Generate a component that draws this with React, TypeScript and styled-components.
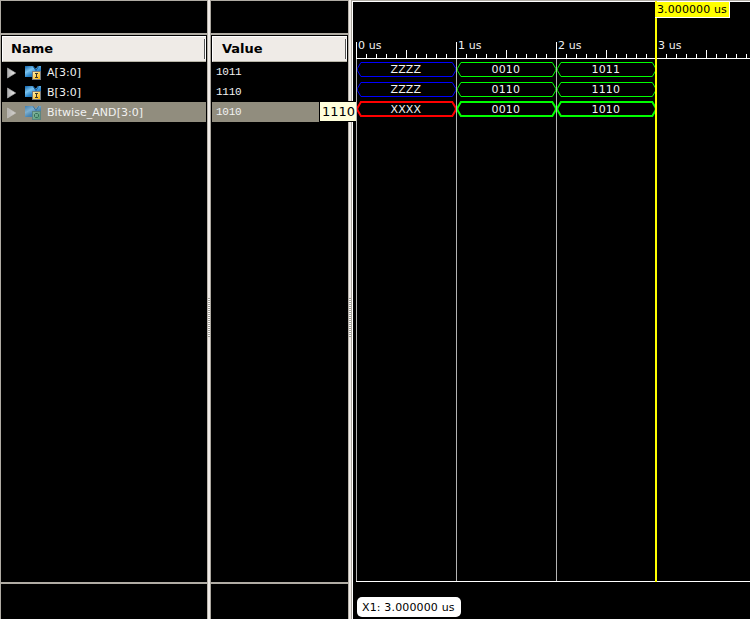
import React from "react";
import styled, { createGlobalStyle } from "styled-components";

const GlobalStyle = createGlobalStyle`
  *, *::after { box-sizing: border-box; }
  body { margin: 0; background: #000; overflow: hidden; }
`;

const Viewer = styled.main`
  position: relative;
  display: grid;
  grid-template-columns: 207px 4px 137px 4px 398px;
  width: 750px;
  height: 619px;
  background: #000;
  color: #f2f2f2;
  font: 11px/20px "DejaVu Sans", sans-serif;
`;

const Pane = styled.section<{ $edge?: boolean }>`
  display: flex;
  flex-direction: column;
  min-width: 0;
  border-top: 1px solid #b0aca4;
  border-left: ${(p) => (p.$edge ? "1px solid #b0aca4" : "0")};
  padding: 0 1px;
`;

const PaneTop = styled.div`
  height: 34px;
  margin: 0 -1px;
  border-bottom: 2px solid #b0aca4;
`;

const Header = styled.header<{ $indent: number; $width: number }>`
  display: flex;
  align-items: center;
  justify-content: space-between;
  width: ${(p) => p.$width}px;
  height: 26px;
  margin-top: 1px;
  padding-left: ${(p) => p.$indent}px;
  background: #efebe7;
  border-top: 1px solid #fff;
  border-left: 1px solid #fff;
  border-bottom: 1px solid #b8b5a8;
  color: #000;
  font: bold 13px/24px "DejaVu Sans", sans-serif;

  &::after {
    content: "";
    width: 2px;
    height: 20px;
    border-left: 1px solid #555;
    border-right: 1px solid #fff;
  }
`;

const Rows = styled.div`
  flex: 1;
`;

const Row = styled.div<{ $selected?: boolean }>`
  display: flex;
  align-items: center;
  height: 20px;
  background: ${(p) => (p.$selected ? "#918d7e" : "transparent")};
`;

const SignalName = styled.span`
  margin-left: 5px;
  padding-top: 1px;
  letter-spacing: 0.04px;
  white-space: pre;
`;

const SignalValue = styled.span`
  padding: 0 0 1px 4px;
  font: 11px/18px "Liberation Mono", monospace;
  letter-spacing: -0.25px;
`;

const PaneBottom = styled.div`
  height: 37px;
  margin: 0 -1px;
  border-top: 2px solid #b0aca4;
`;

const Splitter = styled.div`
  display: flex;
  align-items: center;
  justify-content: center;
  padding-top: 16px;
  background: #efebe7;
  border-left: 1px solid #b8b3ab;
  border-right: 1px solid #aaa69e;
`;

const Grip = styled.div`
  width: 2px;
  height: 39px;
  background: repeating-linear-gradient(#aaa69e 0 1px, #fff 1px 2px);
`;

const WavePane = styled.section`
  border-top: 1px solid #b0aca4;
`;

const Tooltip = styled.div`
  position: absolute;
  left: 319px;
  top: 101px;
  width: 37px;
  height: 21px;
  border: 1px solid #000;
  border-right: 0;
  padding-left: 2px;
  background: #ffffdc;
  color: #000;
  font: 13px/20px "DejaVu Sans", sans-serif;
`;

const CursorTag = styled.div`
  position: absolute;
  left: 655px;
  top: 2px;
  width: 75px;
  height: 16px;
  padding-left: 2px;
  background: #ff0;
  border: solid #fff;
  border-width: 0 1px 1px 0;
  color: #000;
  font: 11px/15px "DejaVu Sans", sans-serif;
  letter-spacing: 0.1px;
`;

const MarkerReadout = styled.div`
  position: absolute;
  left: 357px;
  top: 597px;
  width: 104px;
  height: 20px;
  padding: 1px 0 0 5px;
  border-radius: 5px;
  background: #fff;
  color: #000;
  letter-spacing: 0.15px;
`;

const Drawing = styled.svg`
  display: block;
  flex: none;
`;

const WaveText = styled.text`
  fill: #f2f2f2;
  font: 11px "DejaVu Sans", sans-serif;
  letter-spacing: 0.1px;
`;

type Signal = {
  name: string;
  value: string;
  output?: boolean;
  segments: { label: string; color: string }[];
};

const GREEN = "#00ff00";
const BLUE = "#0000ff";

const signals: Signal[] = [
  {
    name: "A[3:0]",
    value: "1011",
    segments: [
      { label: "ZZZZ", color: BLUE },
      { label: "0010", color: GREEN },
      { label: "1011", color: GREEN },
    ],
  },
  {
    name: "B[3:0]",
    value: "1110",
    segments: [
      { label: "ZZZZ", color: BLUE },
      { label: "0110", color: GREEN },
      { label: "1110", color: GREEN },
    ],
  },
  {
    name: "Bitwise_AND[3:0]",
    value: "1010",
    output: true,
    segments: [
      { label: "XXXX", color: "#ff0000" },
      { label: "0010", color: GREEN },
      { label: "1010", color: GREEN },
    ],
  },
];

function SignalIcons({ output = false }: { output?: boolean }) {
  const id = output ? "out" : "in";
  return (
    <Drawing width="40" height="20" viewBox="0 0 40 20">
      <defs>
        <linearGradient id={`bus-${id}`} x1="0" y1="0" x2=".8" y2="1">
          <stop offset="0" stopColor={output ? "#3f7fb0" : "#0f62a8"} />
          <stop offset=".38" stopColor={output ? "#7fb0cf" : "#7cc4f0"} />
          <stop offset=".65" stopColor={output ? "#4b88b5" : "#2a86cc"} />
          <stop offset="1" stopColor={output ? "#36719b" : "#0d5492"} />
        </linearGradient>
        <linearGradient id={`tag-${id}`} x1="0" y1="0" x2="1" y2="1">
          <stop stopColor={output ? "#87b7a2" : "#fff3b5"} />
          <stop offset="1" stopColor={output ? "#559b77" : "#ffb000"} />
        </linearGradient>
        <linearGradient id={`arrow-${id}`} x1="0" y1="0" x2="1" y2="0">
          <stop stopColor={output ? "#b3b1ad" : "#aaa"} />
          <stop offset="1" stopColor={output ? "#d8d6d2" : "#f5f5f5"} />
        </linearGradient>
      </defs>
      <path d="M5.5 6v10l8.2-5z" fill={`url(#arrow-${id})`} stroke={output ? "#c4c2be" : "#aaa"} strokeWidth=".7" />
      <path d="M23 4h8l2 2.5h1L36 4h3v11h-4l-2-1-2 1h-8z" fill={`url(#bus-${id})`} />
      <path d="m31 4.3 3 4.2 2.7-4.2" fill="none" stroke={output ? "#356f9b" : "#07549a"} />
      <rect x="30.5" y="9.5" width="8" height="8" fill={`url(#tag-${id})`} stroke={output ? "#5b8580" : "#777b80"} />
      {output ? (
        <path d="M33.5 11.5h2l1 1v2l-1 1h-2l-1-1v-2z" fill="none" stroke="#356c56" />
      ) : (
        <path d="M33 11.5h3M34.5 11.5v4M33 15.5h3" fill="none" stroke="#39342b" />
      )}
    </Drawing>
  );
}

function Bus({ signal, row }: { signal: Signal; row: number }) {
  const top = signal.output ? 101 : 61.5 + row * 20;
  const bottom = top + 14;
  const middle = top + 7;
  return (
    <g>
      {signal.segments.map((s, i) => {
        const x = 5.4 + i * 100;
        const end = x + 98.4;
        return (
          <g key={i}>
            <path
              d={`M${x} ${middle - 1}L${x + 3.5} ${top}H${end - 3.5}L${end} ${middle - 1}V${middle + 1}L${end - 3.5} ${bottom}H${x + 3.5}L${x} ${middle + 1}Z`}
              fill="none"
              stroke={s.color}
              strokeWidth={signal.output ? 2 : 1}
            />
            <WaveText x={x + 48.4} y={72 + row * 20} textAnchor="middle">{s.label}</WaveText>
          </g>
        );
      })}
    </g>
  );
}

function Waveforms() {
  const ticks = Array.from({ length: 40 }, (_, i) => i).filter((i) => i !== 30);
  return (
    <Drawing width="398" height="618" viewBox="0 0 398 618">
      <path d="M0 .5H398" stroke="#fff" />
      <path d="M.5 0V618" stroke="#fff" />
      <path d="M4 57.5H398M4 580.5H398" stroke="#fff" />
      {ticks.map((i) => (
        <path key={i} d={`M${4.5 + i * 10} ${i % 10 === 0 ? 41 : i % 5 === 0 ? 49 : 53}V58`} stroke="#fff" />
      ))}
      {[0, 1, 2, 3].map((i) => (
        <WaveText key={i} x={6 + i * 100} y="48">{i} us</WaveText>
      ))}
      {signals.map((signal, i) => <Bus key={signal.name} signal={signal} row={i} />)}
      <path d="M4.5 58V580M104.5 58V580M204.5 58V580" stroke="#b4b4b4" />
      <path d="M304 0V581" stroke="#ff0" strokeWidth="2" />
    </Drawing>
  );
}

export default function App() {
  return (
    <>
      <GlobalStyle />
      <Viewer>
        <Pane $edge>
          <PaneTop />
          <Header $indent={8} $width={204}>Name</Header>
          <Rows>
            {signals.map((s) => (
              <Row key={s.name} $selected={s.output}>
                <SignalIcons output={s.output} />
                <SignalName>{s.name}</SignalName>
              </Row>
            ))}
          </Rows>
          <PaneBottom />
        </Pane>
        <Splitter><Grip /></Splitter>
        <Pane>
          <PaneTop />
          <Header $indent={9} $width={135}>Value</Header>
          <Rows>
            {signals.map((s) => (
              <Row key={s.name} $selected={s.output}>
                <SignalValue>{s.value}</SignalValue>
              </Row>
            ))}
          </Rows>
          <PaneBottom />
        </Pane>
        <Splitter><Grip /></Splitter>
        <WavePane><Waveforms /></WavePane>
        <Tooltip>1110</Tooltip>
        <CursorTag>3.000000 us</CursorTag>
        <MarkerReadout>X1: 3.000000 us</MarkerReadout>
      </Viewer>
    </>
  );
}
